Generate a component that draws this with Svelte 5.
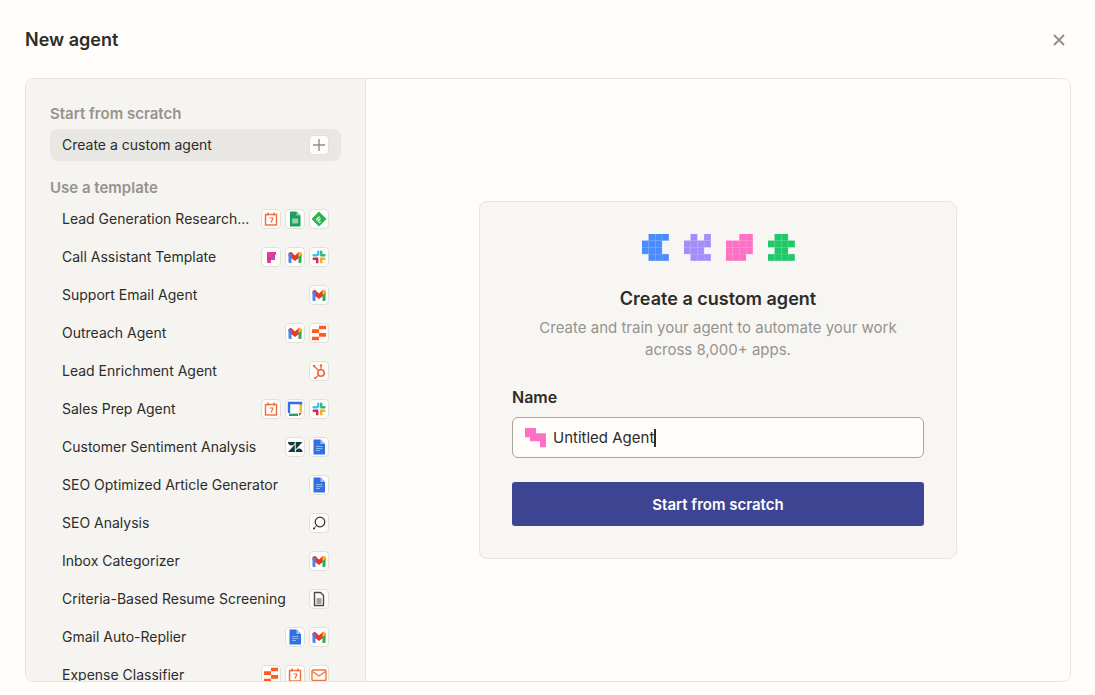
<script>
  const templates = [
    { name: 'Lead Generation Research...', icons: ['schedule', 'sheets', 'feedly'] },
    { name: 'Call Assistant Template', icons: ['fireflies', 'gmail', 'slack'] },
    { name: 'Support Email Agent', icons: ['gmail'] },
    { name: 'Outreach Agent', icons: ['gmail', 'tables'] },
    { name: 'Lead Enrichment Agent', icons: ['hubspot'] },
    { name: 'Sales Prep Agent', icons: ['schedule', 'gcal', 'slack'] },
    { name: 'Customer Sentiment Analysis', icons: ['zendesk', 'docs'] },
    { name: 'SEO Optimized Article Generator', icons: ['docs'] },
    { name: 'SEO Analysis', icons: ['search'] },
    { name: 'Inbox Categorizer', icons: ['gmail'] },
    { name: 'Criteria-Based Resume Screening', icons: ['file'] },
    { name: 'Gmail Auto-Replier', icons: ['docs', 'gmail'] },
    { name: 'Expense Classifier', icons: ['tables', 'schedule', 'email'] }
  ];

  // pixel logos, one string per row
  const logos = [
    { color: '#4a8cff', rows: ['.###', '###.', '###.', '.###'] },
    { color: '#a48cfb', rows: ['.#.#', '####', '###.', '.###'] },
    { color: '#ff6fc4', rows: ['..##', '####', '####', '###.'] },
    { color: '#1fc96b', rows: ['.##.', '####', '.##.', '####'] }
  ];

  const cells = (rows) =>
    rows.flatMap((row, y) => [...row].map((c, x) => (c === '#' ? { x, y } : null)).filter(Boolean));
</script>

{#snippet appIcon(kind)}
  <svg viewBox="0 0 16 16" width="16" height="16" fill="none">
    {#if kind === 'schedule'}
      <rect x="2.5" y="3.5" width="11" height="10.5" stroke="#f26b3a" stroke-width="1.4" />
      <path d="M5 1.500v3M11 1.500v3" stroke="#f26b3a" stroke-width="1.500" />
      <path d="M6.800 7h2.800v1.200L8 11.500" stroke="#f26b3a" stroke-width="1.200" />
    {:else if kind === 'sheets'}
      <path d="M3 0.500h6.500L13.500 4.500V15.500H3z" fill="#1e9e5c" />
      <path d="M9.500 0.500L13.500 4.500H9.500z" fill="#8ed1ad" />
      <rect x="5.200" y="7.500" width="6" height="5" fill="#8fd4ae" />
    {:else if kind === 'feedly'}
      <path d="M8 0.500L15.500 8 8 15.500 0.500 8z" fill="#2bb24c" />
      <path d="M5 9l3.500-3.500M6.500 10.500L9.500 7.500M8 12l1.500-1.500" stroke="#fff" stroke-width="1.200" />
    {:else if kind === 'fireflies'}
      <path d="M4 3h9v3H8v2h4v3H8v3H4z" fill="#e0409a" />
      <path d="M8 6h4v2H8z" fill="#a04fc8" />
      <path d="M4 8h4v3H4z" fill="#c9389f" />
    {:else if kind === 'gmail'}
      <path d="M1.500 4L4 2.800 8 6.500 12 2.800 14.500 4V7L8 12 1.500 7z" fill="#e5392f" />
      <path d="M1.500 5H4.500V14H2.500Q1.500 14 1.500 13z" fill="#4a84ee" />
      <path d="M11.500 7V14H13.500Q14.500 14 14.500 13V5z" fill="#35a853" />
      <path d="M12 2.800L14.500 4V6L11.500 8V4z" fill="#f8bd1c" />
    {:else if kind === 'slack'}
      <rect x="6" y="1.500" width="2.400" height="5.500" rx="1.200" fill="#36c5f0" />
      <rect x="1.500" y="5" width="5" height="2.400" rx="1.200" fill="#36c5f0" />
      <rect x="9" y="5" width="5.500" height="2.400" rx="1.200" fill="#2eb67d" />
      <rect x="9" y="1.500" width="2.400" height="4" rx="1.200" fill="#2eb67d" />
      <rect x="9" y="8.500" width="2.400" height="6" rx="1.200" fill="#ecb22e" />
      <rect x="9" y="8.500" width="5.500" height="2.400" rx="1.200" fill="#ecb22e" />
      <rect x="1.500" y="8.500" width="5.500" height="2.400" rx="1.200" fill="#e01e5a" />
      <rect x="5" y="8.500" width="2.400" height="6" rx="1.200" fill="#e01e5a" />
    {:else if kind === 'tables'}
      <path d="M8 0.700H15V4.300H8zM1 4.300H8V8H1zM8 8H15V11.700H8zM1 11.700H8V15.300H1z" fill="#ff5a1f" />
    {:else if kind === 'hubspot'}
      <circle cx="10" cy="10" r="3.200" stroke="#f2623a" stroke-width="1.600" />
      <path d="M10 6.500V3M3.500 3.500l4.200 4M7.600 12.400L4.500 15" stroke="#f2623a" stroke-width="1.200" />
      <circle cx="10" cy="2.500" r="1.200" fill="#f2623a" />
      <circle cx="3" cy="3" r="1.200" fill="#f2623a" />
      <circle cx="4" cy="15" r="1.100" fill="#f2623a" />
    {:else if kind === 'gcal'}
      <path d="M2 12V2h12v2.500" stroke="#2f6fe8" stroke-width="2.400" />
      <path d="M2 13.800h9" stroke="#1fa463" stroke-width="2.400" />
      <path d="M13.800 3.500v8" stroke="#f9bc15" stroke-width="2.400" />
      <path d="M12 12h3l-3 3z" fill="#e5392f" />
    {:else if kind === 'zendesk'}
      <path d="M1 3h6.800c0 2-1.500 3.500-3.400 3.500S1 5 1 3z" fill="#123c42" />
      <path d="M7.800 5.500V13H1z" fill="#123c42" />
      <path d="M8.700 3v7.500L15.500 3z" fill="#123c42" />
      <path d="M8.700 13c0-2 1.500-3.500 3.400-3.500S15.500 11 15.500 13z" fill="#123c42" />
    {:else if kind === 'docs'}
      <path d="M2.500 0.500h7L14 5v10.500H2.500z" fill="#2f6fe8" />
      <path d="M9.500 0.500L14 5H9.500z" fill="#9dbdf5" />
      <path d="M5 7.500h6.500M5 9.500h6.500M5 11.500h4" stroke="#8fb4f5" stroke-width="1" />
    {:else if kind === 'search'}
      <circle cx="9" cy="7" r="4.800" stroke="#2d2c29" stroke-width="1.200" />
      <circle cx="3" cy="13.500" r="1" fill="#2d2c29" />
      <path d="M3 13.500l2.500-2.800" stroke="#2d2c29" stroke-width="0.800" />
    {:else if kind === 'file'}
      <path d="M3.500 1.500h6L12.500 4.500V14.500H3.500z" stroke="#4b4a46" stroke-width="1.400" />
      <path d="M5.500 8h5M5.500 10h5M5.500 12h5" stroke="#4b4a46" stroke-width="1.200" />
    {:else if kind === 'email'}
      <rect x="1" y="3" width="14" height="10.500" rx="1" stroke="#f2723f" stroke-width="1.400" />
      <path d="M1.500 4.500L8 9l6.500-4.500" stroke="#f2723f" stroke-width="1.400" />
    {/if}
  </svg>
{/snippet}

<div class="page">
  <header class="top">
    <h1>New agent</h1>
    <button class="close" aria-label="Close">
      <svg viewBox="0 0 12 12" width="12" height="12" fill="none">
        <path d="M1 1l10 10M11 1L1 11" stroke="#8f8d88" stroke-width="1.800" />
      </svg>
    </button>
  </header>

  <div class="panel">
    <aside class="side">
      <div class="section first">Start from scratch</div>
      <div class="custom">
        <span class="name">Create a custom agent</span>
        <span class="badge">
          <svg viewBox="0 0 14 14" width="14" height="14" fill="none">
            <path d="M7 1v12M1 7h12" stroke="#8f8d88" stroke-width="1.400" />
          </svg>
        </span>
      </div>
      <div class="section">Use a template</div>
      <ul>
        {#each templates as t}
          <li>
            <span class="name">{t.name}</span>
            <span class="icons">
              {#each t.icons as icon}
                <span class="badge">{@render appIcon(icon)}</span>
              {/each}
            </span>
          </li>
        {/each}
      </ul>
    </aside>

    <main class="main">
      <section class="card">
        <div class="logos">
          {#each logos as logo}
            <svg viewBox="0 0 80 80" width="27" height="27">
              {#each cells(logo.rows) as c}
                <rect x={c.x * 20} y={c.y * 20} width="19" height="19" fill={logo.color} />
                <rect x={c.x * 20 - 1} y={c.y * 20 - 1} width="21" height="21" fill={logo.color} opacity="0.45" />
              {/each}
            </svg>
          {/each}
        </div>
        <h2>Create a custom agent</h2>
        <p>Create and train your agent to automate your work<br />across 8,000+ apps.</p>
        <label for="agent-name">Name</label>
        <div class="field">
          <svg viewBox="0 0 21 20" width="21" height="20">
            <path d="M0 0H11V5.300H21V19.300H15V13.300H5V9.300H0z" fill="#ff6fc4" />
          </svg>
          <span id="agent-name" class="value">Untitled Agent</span><span class="caret"></span>
        </div>
        <button class="start">Start from scratch</button>
      </section>
    </main>
  </div>
</div>

<style>
  :global(body) {
    background: #fffdf9;
    font-family: Inter, "Liberation Sans", sans-serif;
    color: #2d2c29;
  }

  .page {
    height: 695px;
    padding: 0 24px 0 25px;
    box-sizing: border-box;
    overflow: hidden;
  }

  .top {
    height: 78px;
    box-sizing: border-box;
    padding: 2px 6px 0 0;
    display: flex;
    align-items: center;
    justify-content: space-between;
  }

  h1 {
    margin: 0;
    font-size: 18px;
    line-height: 24px;
    font-weight: 600;
  }

  .close {
    border: 0;
    background: none;
    padding: 0;
    display: flex;
  }

  .panel {
    height: 604px;
    box-sizing: border-box;
    border: 1px solid #e7e5e0;
    border-radius: 8px;
    display: flex;
    overflow: hidden;
  }

  .side {
    flex: none;
    width: 291px;
    padding: 0 24px;
    background: #f5f4f1;
    border-right: 1px solid #e7e5e0;
    overflow: hidden;
  }

  .section {
    margin-top: 17px;
    font-size: 15px;
    line-height: 20px;
    font-weight: 600;
    color: #95938e;
  }

  .section.first {
    margin-top: 25px;
  }

  .custom {
    margin-top: 5px;
    height: 32px;
    padding: 0 12px;
    border-radius: 8px;
    background: #e8e7e3;
    display: flex;
    align-items: center;
    justify-content: space-between;
    font-size: 14px;
  }

  ul {
    list-style: none;
    margin: 2px 0 0;
    padding: 0;
  }

  li {
    height: 38px;
    padding: 0 12px;
    display: flex;
    align-items: center;
    justify-content: space-between;
    font-size: 14px;
  }

  .name {
    white-space: nowrap;
    padding-bottom: 2px;
  }

  .icons {
    display: flex;
    gap: 4px;
  }

  .badge {
    width: 20px;
    height: 20px;
    box-sizing: border-box;
    border: 1px solid #e2e0da;
    border-radius: 4px;
    background: #fffdf9;
    display: flex;
    align-items: center;
    justify-content: center;
  }

  .badge svg {
    flex: none;
  }

  .main {
    flex: 1;
    display: flex;
    align-items: center;
    justify-content: center;
  }

  .card {
    width: 478px;
    height: 358px;
    box-sizing: border-box;
    padding: 32px 32px 0;
    background: #f7f6f3;
    border: 1px solid #e7e5e0;
    border-radius: 8px;
    display: flex;
    flex-direction: column;
  }

  .logos {
    display: flex;
    justify-content: center;
    gap: 15px;
    height: 27px;
  }

  h2 {
    margin: 26px 0 0;
    font-size: 18px;
    line-height: 24px;
    font-weight: 600;
    text-align: center;
  }

  p {
    margin: 6px 0 0;
    font-size: 15px;
    line-height: 22px;
    color: #95938e;
    text-align: center;
  }

  label {
    margin-top: 26px;
    font-size: 16px;
    line-height: 20px;
    font-weight: 600;
  }

  .field {
    margin-top: 10px;
    height: 41px;
    box-sizing: border-box;
    border: 1px solid #a8a6a0;
    border-radius: 6px;
    background: #fffdf9;
    padding: 0 12px;
    display: flex;
    align-items: center;
    font-size: 15px;
  }

  .value {
    margin-left: 7px;
  }

  .caret {
    width: 2px;
    height: 18px;
    background: #2d2c29;
  }

  .start {
    margin-top: 24px;
    height: 44px;
    border: 0;
    border-radius: 3px;
    background: #3d4592;
    color: #fffdf9;
    font: 600 15px Inter, "Liberation Sans", sans-serif;
  }
</style>
